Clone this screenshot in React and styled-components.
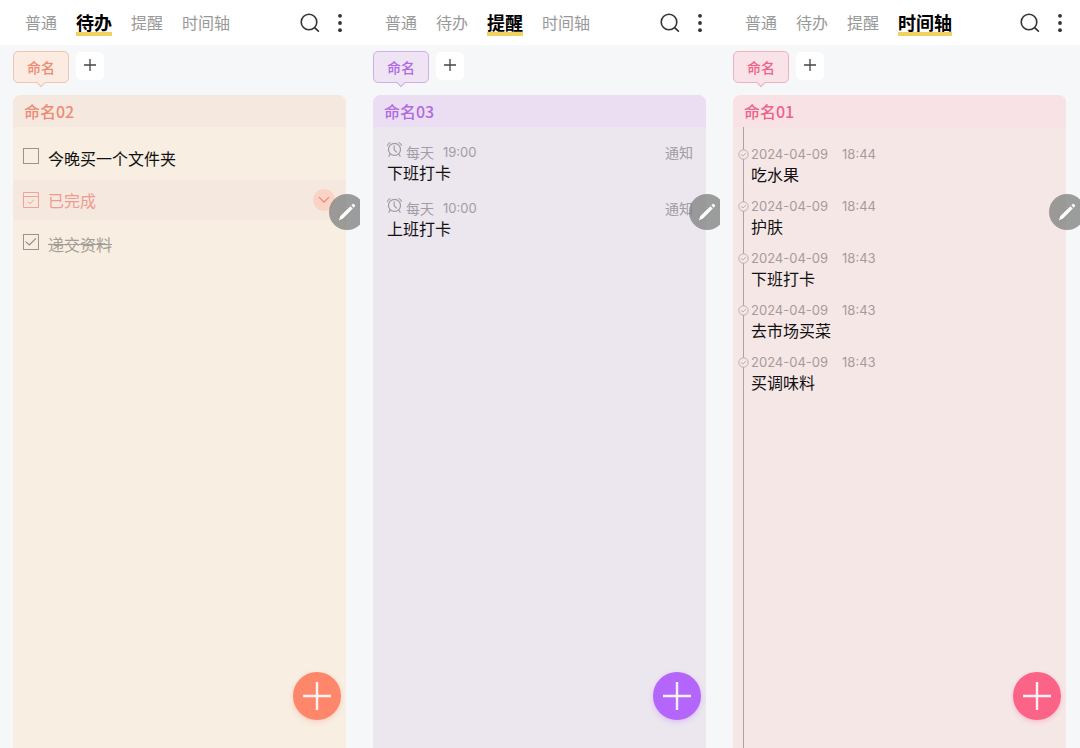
import React from "react";
import styled, { createGlobalStyle, ThemeProvider } from "styled-components";

const GlobalStyle = createGlobalStyle`
  *, *::before, *::after { box-sizing: border-box; }
  body {
    margin: 0;
    background: #f5f7f9;
    font-family: "Noto Sans CJK SC", sans-serif;
    font-size: 16px;
    line-height: 20px;
    color: #111;
  }
  button, input { font: inherit; color: inherit; margin: 0; }
  button { padding: 0; border: 0; background: none; cursor: pointer; }
  ul, ol { list-style: none; margin: 0; padding: 0; }
  h2, p { margin: 0; }
  svg { display: block; flex: none; }
`;

const Screens = styled.main`
  display: grid;
  grid-template-columns: repeat(3, 1fr);
  min-height: 100vh;
`;

const Screen = styled.section`
  position: relative;
  display: flex;
  flex-direction: column;
  min-width: 0;
  overflow: hidden;
  background: #f5f7f9;
`;

const TopBar = styled.header`
  display: flex;
  align-items: center;
  justify-content: space-between;
  height: 45px;
  padding: 0 12px 0 25px;
  background: #fff;
`;

const Tabs = styled.nav`
  display: flex;
  align-items: center;
  gap: 19px;
`;

const Tab = styled.a`
  height: 26px;
  line-height: 24px;
  font-size: ${(p) => (p.$active ? 18 : 16)}px;
  font-weight: ${(p) => (p.$active ? 700 : 400)};
  color: ${(p) => (p.$active ? "#000" : "#999")};
  text-decoration: none;
  white-space: nowrap;
  background: ${(p) =>
    p.$active ? "linear-gradient(#efd262, #efd262) 0 100% / 100% 4px no-repeat" : "none"};
`;

const Actions = styled.div`
  display: flex;
  align-items: center;
  gap: 12px;
`;

const IconButton = styled.button`
  display: grid;
  place-items: center;
`;

const Groups = styled.div`
  display: flex;
  align-items: flex-start;
  gap: 7px;
  height: 50px;
  padding: 6px 13px 0;
`;

const GroupChip = styled.button`
  position: relative;
  width: 56px;
  height: 32px;
  border: 1px solid ${(p) => p.theme.chipBorder};
  border-radius: 5px;
  background: ${(p) => p.theme.chip};
  color: ${(p) => p.theme.title};
  font-size: 14px;
  font-weight: 500;

  &::after {
    content: "";
    position: absolute;
    left: 24px;
    bottom: -4px;
    width: 6px;
    height: 6px;
    border: solid ${(p) => p.theme.chipBorder};
    border-width: 0 1px 1px 0;
    background: ${(p) => p.theme.chip};
    transform: rotate(45deg);
  }
`;

const AddGroup = styled.button`
  display: grid;
  place-items: center;
  width: 28px;
  height: 28px;
  margin-top: 1px;
  padding-bottom: 2px;
  border-radius: 5px;
  background: #fff;
`;

const Card = styled.article`
  flex: 1;
  display: flex;
  flex-direction: column;
  margin: 0 14px 0 13px;
  border-radius: 8px 8px 0 0;
  overflow: hidden;
  background: ${(p) => p.theme.body};
`;

const CardTitle = styled.h2`
  padding: 0 11px;
  height: 32px;
  line-height: 32px;
  font-size: 16px;
  font-weight: 500;
  color: ${(p) => p.theme.title};
  background: ${(p) => p.theme.head};
`;

const TodoList = styled.div`
  display: flex;
  flex-direction: column;
  padding-top: 8px;
`;

const TodoRow = styled.label`
  display: flex;
  align-items: center;
  gap: 9px;
  height: 45px;
  padding: 0 10px;
  color: ${(p) => (p.$done ? "#a39d97" : "#111")};
  text-decoration: ${(p) => (p.$done ? "line-through" : "none")};
`;

const CheckCell = styled.span`
  display: grid;
  margin-bottom: 4px;

  & > * { grid-area: 1 / 1; }
  & > svg { pointer-events: none; }
`;

const CheckBox = styled.input`
  appearance: none;
  width: 16px;
  height: 16px;
  border: 1px solid #9a9490;
  background: transparent;
`;

const DoneToggle = styled.button`
  display: flex;
  align-items: center;
  gap: 9px;
  height: 40px;
  margin-bottom: 1px;
  padding: 0 11px 0 10px;
  background: ${(p) => p.theme.head};
  color: #f19a8f;
`;

const Chevron = styled.span`
  display: grid;
  place-items: center;
  width: 22px;
  height: 22px;
  margin-left: auto;
  border-radius: 50%;
  background: #fbd3c6;
`;

const ReminderList = styled.ul`
  display: flex;
  flex-direction: column;
  gap: 16px;
  padding: 15px 13px 0 14px;
`;

const ReminderMeta = styled.div`
  display: flex;
  align-items: flex-start;
  height: 20px;
  font-size: 14px;
  color: ${(p) => p.theme.muted};
`;

const Repeat = styled.span`
  margin: 0 9px 0 4px;
`;

const Clock = styled.time`
  font-family: Inter, "Noto Sans CJK SC", sans-serif;
  font-size: 13px;
  color: ${(p) => p.theme.muted};
`;

const Notice = styled.span`
  margin-left: auto;
`;

const Timeline = styled.ol`
  flex: 1;
  display: flex;
  flex-direction: column;
  gap: 12px;
  margin-left: 10px;
  padding-top: 17px;
  border-left: 1px solid #aca2a2;
`;

const Stamp = styled.div`
  display: flex;
  align-items: center;
  height: 20px;
  margin-left: -6px;
`;

const DateText = styled(Clock)`
  margin: 0 14px 0 2px;
`;

const Entry = styled.p`
  padding-left: ${(p) => (p.$indent ? 7 : 0)}px;
`;

const PenButton = styled.button`
  position: absolute;
  top: 194px;
  right: -5px;
  display: grid;
  place-items: center;
  width: 36px;
  height: 36px;
  border-radius: 50%;
  background: rgba(132, 132, 132, 0.8);
`;

const AddButton = styled.button`
  position: absolute;
  right: 19px;
  bottom: 28px;
  display: grid;
  place-items: center;
  width: 48px;
  height: 48px;
  border-radius: 50%;
  background: ${(p) => p.theme.accent};
  box-shadow: 0 2px 5px ${(p) => p.theme.shadow};
`;

const orange = {
  title: "#ef8a74", chip: "#fbebe1", chipBorder: "#f1c3b6", head: "#f5e9df",
  body: "#f8eee2", accent: "#fe866b", shadow: "rgba(254, 134, 107, 0.3)", muted: "#8c8680",
};
const purple = {
  title: "#b06be2", chip: "#efe4f4", chipBorder: "#cfaee6", head: "#ebdef3",
  body: "#ece6ef", accent: "#b466fc", shadow: "rgba(180, 102, 252, 0.3)", muted: "#a19ca5",
};
const pink = {
  title: "#ee6389", chip: "#fae3e8", chipBorder: "#efb0c0", head: "#f8e2e6",
  body: "#f6e7e7", accent: "#fb6387", shadow: "rgba(251, 99, 135, 0.3)", muted: "#a59b9b",
};

const SearchIcon = () => (
  <svg width="20" height="20" viewBox="0 0 20 20" fill="none" stroke="#333" strokeWidth="1.6" strokeLinecap="round">
    <circle cx="9" cy="9" r="7.8" />
    <path d="M14.8 14.8 18.4 18.2" />
  </svg>
);

const MoreIcon = () => (
  <svg width="16" height="20" viewBox="0 0 16 20" fill="#333">
    <circle cx="8" cy="2.8" r="1.9" />
    <circle cx="8" cy="10" r="1.9" />
    <circle cx="8" cy="17.2" r="1.9" />
  </svg>
);

const PlusIcon = ({ size, color, width }) => (
  <svg width={size} height={size} viewBox={`0 0 ${size} ${size}`} stroke={color} strokeWidth={width}>
    <path d={`M${size / 2} 0V${size}M0 ${size / 2}H${size}`} />
  </svg>
);

const PenIcon = () => (
  <svg width="20" height="20" viewBox="0 0 20 20" fill="#fff">
    <path d="M1.8 18.4 3.4 14 13.4 4.2 15.8 6.6 6.2 16.3Z" />
    <path d="M14.3 3.3 15.7 2Q16.3 1.6 16.9 2.1L17.9 3.1Q18.4 3.7 17.9 4.3L16.7 5.7Z" />
  </svg>
);

const AlarmIcon = () => (
  <svg width="15" height="15" viewBox="0 0 15 15" fill="none" stroke="#a09ba4" strokeWidth="1.2" strokeLinecap="round">
    <circle cx="7.5" cy="7.4" r="6" />
    <path d="M7.2 3.8V7.8L9.4 10M.6 3.4Q1 1.4 3 .7M14.4 3.4Q14 1.4 12 .7M3.2 11.9 1.9 14.2M11.8 11.9 13.1 14.2" />
  </svg>
);

const TickIcon = () => (
  <svg width="16" height="16" viewBox="0 0 16 16" fill="none" stroke="#8f8a86" strokeWidth="1.1">
    <path d="M2.6 7.6 6.3 11 13 4.4" />
  </svg>
);

const DoneIcon = () => (
  <svg width="16" height="16" viewBox="0 0 16 16" fill="none" stroke="#f0a298" strokeWidth="1">
    <path d="M.5.5H15.5V15.5H.5ZM.5 4.5H15.5M5 9.8 7.2 11.6 10.8 8" />
  </svg>
);

const DotIcon = () => (
  <svg width="11" height="11" viewBox="0 0 11 11" fill="#f6e7e7" stroke="#b3a8a9" strokeWidth="0.9">
    <circle cx="5.5" cy="5.5" r="4.7" />
    <path d="M3.2 5.4 5 7 8 4" fill="none" />
  </svg>
);

const TAB_NAMES = ["普通", "待办", "提醒", "时间轴"];

function Phone({ theme, active, title, children }) {
  return (
    <ThemeProvider theme={theme}>
      <Screen>
        <TopBar>
          <Tabs>
            {TAB_NAMES.map((name) => (
              <Tab key={name} href="#" $active={name === active} aria-current={name === active ? "page" : undefined}>
                {name}
              </Tab>
            ))}
          </Tabs>
          <Actions>
            <IconButton aria-label="搜索"><SearchIcon /></IconButton>
            <IconButton aria-label="更多"><MoreIcon /></IconButton>
          </Actions>
        </TopBar>
        <Groups>
          <GroupChip>命名</GroupChip>
          <AddGroup aria-label="添加分组"><PlusIcon size={12} color="#444" width={1.3} /></AddGroup>
        </Groups>
        <Card>
          <CardTitle>{title}</CardTitle>
          {children}
        </Card>
        <PenButton aria-label="编辑"><PenIcon /></PenButton>
        <AddButton aria-label="新建"><PlusIcon size={28} color="#fff2f2" width={2.4} /></AddButton>
      </Screen>
    </ThemeProvider>
  );
}

function Todo({ text, done }) {
  return (
    <TodoRow $done={done}>
      <CheckCell>
        <CheckBox type="checkbox" defaultChecked={done} />
        {done && <TickIcon />}
      </CheckCell>
      {text}
    </TodoRow>
  );
}

const REMINDERS = [
  { time: "19:00", text: "下班打卡" },
  { time: "10:00", text: "上班打卡" },
];

const EVENTS = [
  { time: "18:44", text: "吃水果" },
  { time: "18:44", text: "护肤" },
  { time: "18:43", text: "下班打卡" },
  { time: "18:43", text: "去市场买菜" },
  { time: "18:43", text: "买调味料" },
];

export default function App() {
  return (
    <>
      <GlobalStyle />
      <Screens>
        <Phone theme={orange} active="待办" title="命名02">
          <TodoList>
            <Todo text="今晚买一个文件夹" />
            <DoneToggle aria-expanded="true">
              <DoneIcon />
              已完成
              <Chevron>
                <svg width="12" height="8" viewBox="0 0 12 8" fill="none" stroke="#f0826f" strokeWidth="1.2">
                  <path d="M1 1.2 6 6.2 11 1.2" />
                </svg>
              </Chevron>
            </DoneToggle>
            <Todo text="递交资料" done />
          </TodoList>
        </Phone>
        <Phone theme={purple} active="提醒" title="命名03">
          <ReminderList>
            {REMINDERS.map((item) => (
              <li key={item.time}>
                <ReminderMeta>
                  <AlarmIcon />
                  <Repeat>每天</Repeat>
                  <Clock>{item.time}</Clock>
                  <Notice>通知</Notice>
                </ReminderMeta>
                <Entry>{item.text}</Entry>
              </li>
            ))}
          </ReminderList>
        </Phone>
        <Phone theme={pink} active="时间轴" title="命名01">
          <Timeline>
            {EVENTS.map((item) => (
              <li key={item.text}>
                <Stamp>
                  <DotIcon />
                  <DateText>2024-04-09</DateText>
                  <Clock>{item.time}</Clock>
                </Stamp>
                <Entry $indent>{item.text}</Entry>
              </li>
            ))}
          </Timeline>
        </Phone>
      </Screens>
    </>
  );
}
